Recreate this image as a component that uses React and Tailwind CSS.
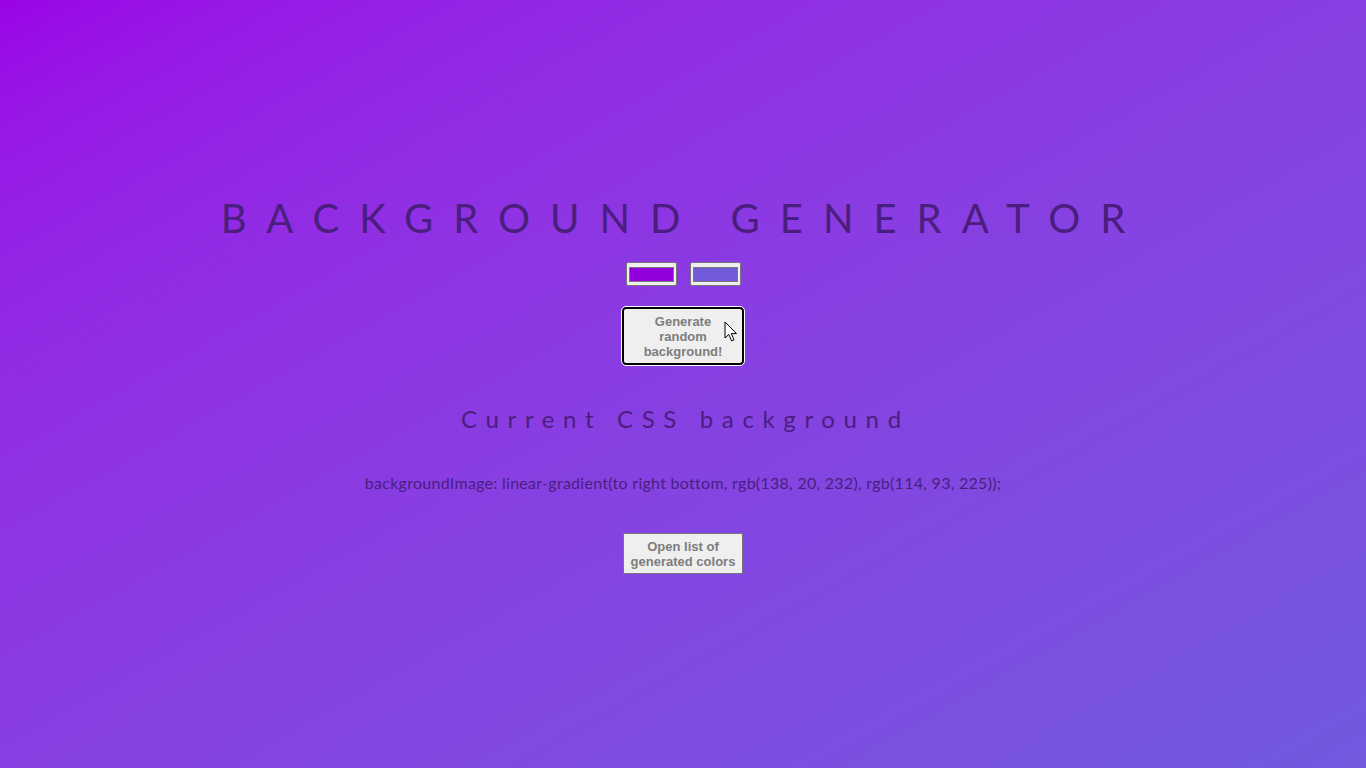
import React from "react";

function Cursor() {
  return (
    <svg
      className="absolute left-[102px] top-[14px] pointer-events-none"
      width="14"
      height="22"
      viewBox="0 0 14 22"
    >
      <path
        d="M1 1 L1 17 L4.8 13.4 L7.6 19.8 L10 18.8 L7.3 12.6 L12.5 12.6 Z"
        fill="#ffffff"
        stroke="#000000"
        strokeWidth="1"
        strokeLinejoin="round"
      />
    </svg>
  );
}

function Swatch({ color }) {
  return (
    <div className="w-[51px] h-[24px] bg-[#efefef] border border-[#767676] rounded-[2px] flex items-center justify-center">
      <div
        className="w-[45px] h-[15px] border border-[#777]"
        style={{ backgroundColor: color }}
      />
    </div>
  );
}

export default function App() {
  return (
    <div
      className="w-full min-h-screen h-[768px] bg-gradient-to-br from-[#9a02e6] to-[#7159de] flex flex-col items-center justify-center text-[#4a1e7e]"
      style={{ fontFamily: "Lato, 'Open Sans', sans-serif" }}
    >
      <h1 className="text-[40px] leading-[48px] tracking-[0.5em] font-normal">
        BACKGROUND GENERATOR
      </h1>
      <div className="flex gap-[13px] mt-[20px]">
        <Swatch color="#9400dd" />
        <Swatch color="#735ad9" />
      </div>
      <div className="relative mt-[21px]">
        <button
          className="w-[122px] h-[58px] bg-[#efefef] border-2 border-black rounded-[4px] outline outline-1 outline-white text-[13px] leading-[15px] font-bold text-[#7d7d7d] px-4"
          style={{ fontFamily: "'Liberation Sans', Arial, sans-serif" }}
        >
          Generate random background!
        </button>
        <Cursor />
      </div>
      <h3 className="mt-[38px] text-[24px] leading-[32px] tracking-[0.36em] pl-[0.2em] font-normal">
        Current CSS background
      </h3>
      <p className="mt-[36px] text-[16px] leading-[24px] tracking-[0.28px]">
        backgroundImage: linear-gradient(to right bottom, rgb(138, 20, 232), rgb(114, 93, 225));
      </p>
      <button
        className="mt-[38px] w-[120px] h-[41px] bg-[#efefef] border border-[#767676] text-[13px] leading-[15px] font-bold text-[#7d7d7d]"
        style={{ fontFamily: "'Liberation Sans', Arial, sans-serif" }}
      >
        Open list of
        <br />
        generated colors
      </button>
    </div>
  );
}
